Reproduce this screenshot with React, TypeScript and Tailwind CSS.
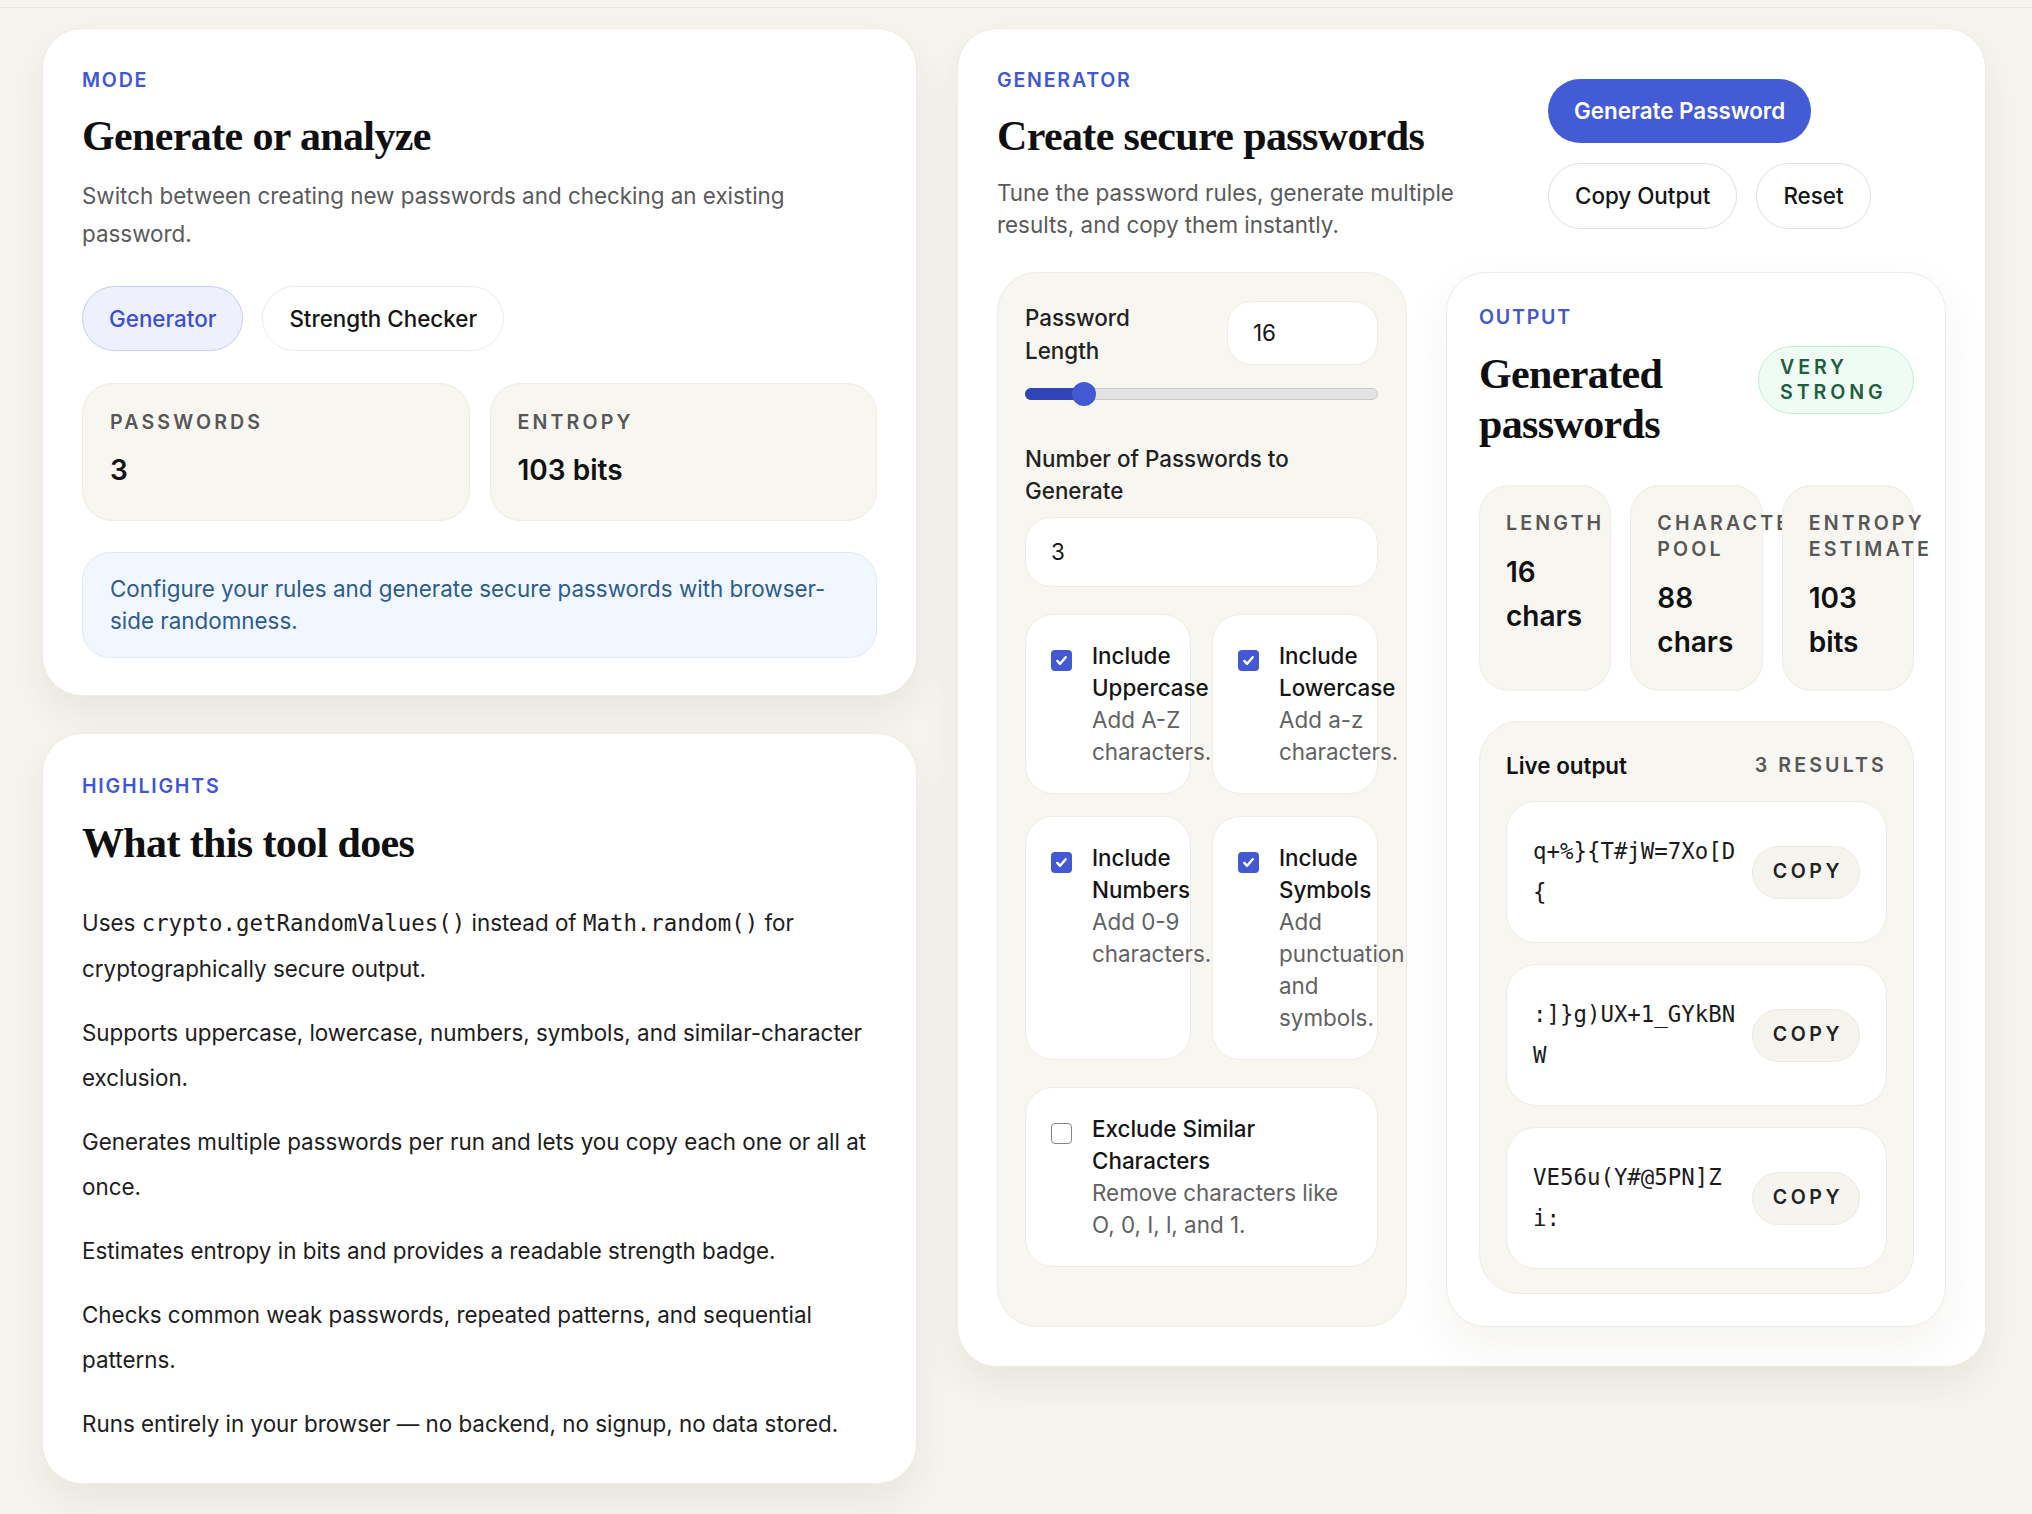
import type { ReactNode } from "react";

const eyebrow = "text-[19.6px] font-semibold uppercase leading-[28px] tracking-[0.09em] text-[#4257d4]";
const serifHeading = "font-['Liberation_Serif',serif] text-[42px] font-bold leading-[50px] tracking-[-0.015em] text-[#0f0f0f]";
const tinyLabel = "text-[19.6px] font-semibold uppercase tracking-[0.16em] text-[#575757]";
const mono = "font-['DejaVu_Sans_Mono',monospace]";

function Stat({ label, value }: { label: string; value: string }) {
	return (
		<div className="rounded-[30px] border border-[#f0ece4] bg-[#f8f6f1] px-[27px] pb-[30px] pt-[24px]">
			<p className={`${tinyLabel} leading-[28px]`}>{label}</p>
			<p className="mt-[14px] text-[28px] font-semibold leading-[40px] text-[#111]">{value}</p>
		</div>
	);
}

function Tile({ label, value }: { label: string; value: string }) {
	return (
		<div className="relative rounded-[30px] border border-[#f0ece4] bg-[#f8f6f1] px-[26px] pb-[26px] pt-[24px]">
			<p className={`${tinyLabel} leading-[26px]`}>{label}</p>
			<p className="mt-[14px] text-[28px] font-semibold leading-[44px] text-[#111]">{value}</p>
		</div>
	);
}

function Checkbox({ on }: { on: boolean }) {
	if (!on) {
		return <span className="mt-[10px] h-[21px] w-[21px] shrink-0 rounded-[4px] border-[1.5px] border-[#858585] bg-white" />;
	}
	return (
		<span className="mt-[10px] flex h-[21px] w-[21px] shrink-0 items-center justify-center rounded-[4px] bg-[#4359d4]">
			<svg viewBox="0 0 16 16" className="h-[15px] w-[15px]" fill="none" stroke="white" strokeWidth="2.6" strokeLinecap="round" strokeLinejoin="round">
				<path d="M3.5 8.5l3 3 6-7" />
			</svg>
		</span>
	);
}

function Option({ on, title, text }: { on: boolean; title: string; text: string }) {
	return (
		<label className="flex gap-[20px] rounded-[28px] border border-[#f0ece4] bg-white p-[25px]">
			<Checkbox on={on} />
			<div className="flex-1 text-[22.4px] leading-[32px]">
				<p className="font-medium text-[#151515]">{title}</p>
				<p className="text-[#626262]">{text}</p>
			</div>
		</label>
	);
}

function PasswordRow({ value }: { value: string }) {
	return (
		<div className="flex items-center gap-[12px] rounded-[30px] border border-[#f0ece4] bg-white px-[26px] py-[29px]">
			<p className={`${mono} min-w-0 flex-1 break-all text-[22.4px] leading-[41px] text-[#1b1b1b]`}>{value}</p>
			<button type="button" className="h-[53px] shrink-0 rounded-full border border-[#eee9e0] bg-[#f6f4ef] pl-[20px] pr-[16px] text-[19.6px] font-semibold tracking-[0.18em] text-[#222]">
				COPY
			</button>
		</div>
	);
}

function Card({ children, className = "" }: { children: ReactNode; className?: string }) {
	return (
		<section className={`rounded-[40px] border border-[#efebe3] bg-white px-[39px] shadow-[0_18px_40px_rgba(60,45,20,0.07)] ${className}`}>
			{children}
		</section>
	);
}

export default function App() {
	return (
		<div className="min-h-screen bg-[#f6f4ef] font-['Inter',sans-serif] text-[#151515]">
			<div className="h-[8px] border-b border-[#ebe7df]" />

			<main className="grid grid-cols-[875px_1029px] items-start gap-[40px] pb-[32px] pl-[42px] pt-[20px]">
				<div className="flex flex-col gap-[37px]">
					<Card className="pb-[37px] pt-[37px]">
						<p className={eyebrow}>Mode</p>
						<h2 className={`mt-[17px] ${serifHeading}`}>Generate or analyze</h2>
						<p className="mt-[16px] text-[22.4px] leading-[38px] text-[#5a5a5a]">
							Switch between creating new passwords and checking an existing password.
						</p>
						<div className="mt-[33px] flex gap-[19px]">
							<button type="button" className="h-[65px] rounded-full border border-[#c5cdf6] bg-[#eef1fd] px-[26px] text-[22.4px] font-medium text-[#3c50cf]">
								Generator
							</button>
							<button type="button" className="h-[65px] rounded-full border border-[#efebe3] bg-white px-[26px] text-[22.4px] font-medium text-[#151515]">
								Strength Checker
							</button>
						</div>
						<div className="mt-[32px] grid grid-cols-2 gap-[20px]">
							<Stat label="Passwords" value="3" />
							<Stat label="Entropy" value="103 bits" />
						</div>
						<div className="mt-[31px] rounded-[28px] border border-[#dceaf8] bg-[#f0f7fe] px-[27px] py-[20px] text-[22.4px] leading-[32px] text-[#2f5b8e]">
							Configure your rules and generate secure passwords with browser-side randomness.
						</div>
					</Card>

					<Card className="pb-[37px] pt-[38px]">
						<p className={eyebrow}>Highlights</p>
						<h2 className={`mt-[18px] ${serifHeading}`}>What this tool does</h2>
						<div className="mt-[32px] flex flex-col gap-[19px] text-[22.4px] leading-[45px] text-[#1d1d1d]">
							<p>
								Uses <code className={mono}>crypto.getRandomValues()</code> instead of <code className={mono}>Math.random()</code> for
								cryptographically secure output.
							</p>
							<p>Supports uppercase, lowercase, numbers, symbols, and similar-character exclusion.</p>
							<p>Generates multiple passwords per run and lets you copy each one or all at once.</p>
							<p>Estimates entropy in bits and provides a readable strength badge.</p>
							<p>Checks common weak passwords, repeated patterns, and sequential patterns.</p>
							<p>Runs entirely in your browser — no backend, no signup, no data stored.</p>
						</div>
					</Card>
				</div>

				<Card className="pb-[39px] pt-[37px]">
					<div className="flex items-center gap-[31px]">
						<div className="w-[520px] shrink-0">
							<p className={eyebrow}>Generator</p>
							<h2 className={`mt-[17px] ${serifHeading}`}>Create secure passwords</h2>
							<p className="mt-[16px] text-[22.4px] leading-[32px] text-[#5a5a5a]">
								Tune the password rules, generate multiple results, and copy them instantly.
							</p>
						</div>
						<div className="flex flex-1 flex-wrap gap-x-[19px] gap-y-[20px]">
							<button type="button" className="h-[64px] rounded-full bg-[#435bd5] px-[26px] text-[22.4px] font-semibold text-white">
								Generate Password
							</button>
							<button type="button" className="h-[66px] rounded-full border border-[#e0e0e0] bg-white px-[26px] text-[22.4px] font-medium text-[#151515]">
								Copy Output
							</button>
							<button type="button" className="h-[66px] rounded-full border border-[#e0e0e0] bg-white px-[26px] text-[22.4px] font-medium text-[#151515]">
								Reset
							</button>
						</div>
					</div>

					<div className="mt-[31px] grid grid-cols-[410px_1fr] gap-[39px]">
						<div className="rounded-[40px] border border-[#f0ece4] bg-[#f8f6f1] pb-[28px] pl-[27px] pr-[28px] pt-[28px]">
							<div className="flex items-start justify-between">
								<label className="max-w-[160px] text-[22.4px] font-medium leading-[33px] text-[#222]">Password Length</label>
								<div className="flex h-[64px] w-[151px] items-center rounded-[24px] border border-[#f0ece4] bg-white px-[25px] text-[22.4px]">16</div>
							</div>
							<div className="relative mt-[15px] h-[24px]">
								<div className="absolute inset-x-0 top-[6px] h-[12px] rounded-full border border-[#c9c9c9] bg-[#e3e3e3]" />
								<div className="absolute left-0 top-[6px] h-[12px] w-[60px] rounded-full bg-[#2f45b5]" />
								<div className="absolute left-[47px] top-0 h-[24px] w-[24px] rounded-full bg-[#4359d4]" />
							</div>
							<label className="mt-[37px] block max-w-[300px] text-[22.4px] font-medium leading-[32px] text-[#222]">
								Number of Passwords to Generate
							</label>
							<div className="mt-[10px] flex h-[70px] items-center rounded-[26px] border border-[#f0ece4] bg-white px-[25px] text-[22.4px]">3</div>

							<div className="mt-[27px] grid grid-cols-2 gap-x-[21px] gap-y-[22px]">
								<Option on title="Include Uppercase" text="Add A-Z characters." />
								<Option on title="Include Lowercase" text="Add a-z characters." />
								<Option on title="Include Numbers" text="Add 0-9 characters." />
								<Option on title="Include Symbols" text="Add punctuation and symbols." />
							</div>
							<div className="mt-[27px]">
								<Option on={false} title="Exclude Similar Characters" text="Remove characters like O, 0, I, l, and 1." />
							</div>
						</div>

						<div className="rounded-[40px] border border-[#f0ece4] bg-white pb-[32px] pl-[32px] pr-[31px] pt-[30px] shadow-[0_20px_50px_rgba(60,45,20,0.06)]">
							<p className={eyebrow}>Output</p>
							<div className="mt-[18px] flex items-start justify-between gap-[20px]">
								<h3 className={`flex-1 ${serifHeading}`}>Generated passwords</h3>
								<span className="-mt-[3px] w-[156px] rounded-full border border-[#bfeed2] bg-[#effcf5] px-[21px] py-[8px] text-[19.6px] font-semibold uppercase leading-[25px] tracking-[0.2em] text-[#1f5e3c]">
									Very Strong
								</span>
							</div>

							<div className="mt-[36px] grid grid-cols-3 gap-[19px]">
								<Tile label="Length" value="16 chars" />
								<Tile label="Character Pool" value="88 chars" />
								<Tile label="Entropy Estimate" value="103 bits" />
							</div>

							<div className="mt-[30px] rounded-[40px] border border-[#f0ece4] bg-[#f8f6f1] px-[26px] pb-[24px] pt-[28px]">
								<div className="flex items-center justify-between">
									<p className="text-[22.4px] font-semibold leading-[32px] text-[#111]">Live output</p>
									<p className={tinyLabel}>3 Results</p>
								</div>
								<div className="mt-[19px] flex flex-col gap-[21px]">
									<PasswordRow value="q+%}{T#jW=7Xo[D{" />
									<PasswordRow value=":]}g)UX+1_GYkBNW" />
									<PasswordRow value="VE56u(Y#@5PN]Zi:" />
								</div>
							</div>
						</div>
					</div>
				</Card>
			</main>
		</div>
	);
}
